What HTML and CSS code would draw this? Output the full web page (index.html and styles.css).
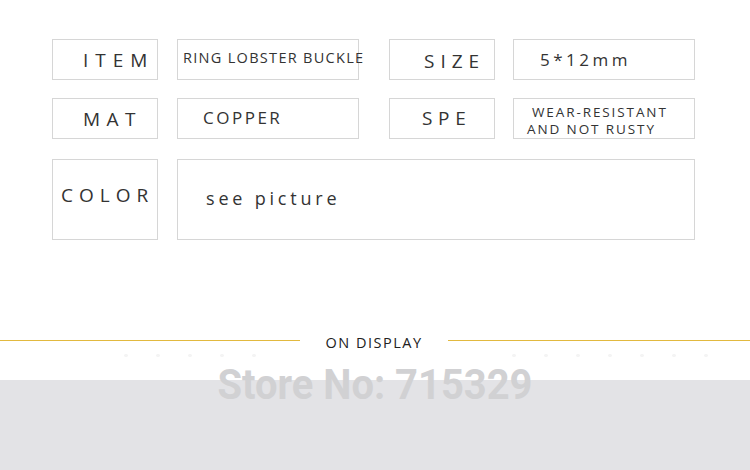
FILE: index.html
```html
<!DOCTYPE html>
<html lang="en">
<head>
  <meta charset="UTF-8" />
  <title>Product Specs</title>
  <link rel="stylesheet" href="styles.css">
</head>
<body>
  <div class="specs">
    <div class="spec-row">
      <div class="spec-label label-item">ITEM</div>
      <div class="spec-value value-item">RING LOBSTER BUCKLE</div>
      <div class="spec-label second label-size">SIZE</div>
      <div class="spec-value second value-size">5*12mm</div>
    </div>
    <div class="spec-row">
      <div class="spec-label label-mat">MAT</div>
      <div class="spec-value value-mat">COPPER</div>
      <div class="spec-label second label-spe">SPE</div>
      <div class="spec-value second value-spe">WEAR-RESISTANT<br>AND NOT RUSTY</div>
    </div>
    <div class="spec-row tall">
      <div class="spec-label label-color">COLOR</div>
      <div class="spec-value wide value-color">see picture</div>
    </div>
  </div>

  <div class="display-head">
    <span class="gold-line"></span>
    <h4>ON DISPLAY</h4>
    <span class="gold-line"></span>
  </div>

  <div class="dots">
    <span class="dot-group left"></span>
    <span class="dot-group right"></span>
  </div>

  <div class="store-banner">
    <div class="store-no">Store No: 715329</div>
  </div>
</body>
</html>
```

FILE: styles.css
```css
* {
  box-sizing: border-box;
}
body {
  margin: 0;
  width: 750px;
  height: 470px;
  overflow: hidden;
  background: #fff;
  font-family: 'Open Sans', 'Liberation Sans', sans-serif;
  color: #333;
}

.specs {
  padding: 39px 0 0 52px;
}

.spec-row {
  display: flex;
  height: 41px;
  margin-bottom: 18px;
}

.spec-row:nth-child(2) {
  margin-bottom: 20px;
}

.spec-row.tall {
  height: 81px;
  margin-bottom: 0;
}

.spec-label,
.spec-value {
  border: 1px solid #d6d6d6;
  display: flex;
  align-items: center;
  white-space: nowrap;
}

.spec-label {
  width: 106px;
  font-size: 19px;
  letter-spacing: 6.5px;
}

.spec-value {
  width: 182px;
  margin-left: 19px;
}

.spec-label.second {
  margin-left: 30px;
}

.spec-value.second {
  margin-left: 18px;
}

.spec-value.wide {
  width: 518px;
}

.label-item { padding-left: 30px; letter-spacing: 7px; }
.label-mat { padding-left: 30px; }
.label-size { padding: 3px 0 0 34px; letter-spacing: 6px; }
.label-spe { padding-left: 32px; letter-spacing: 5.7px; padding-bottom: 2px; }
.label-color { padding: 0 0 10px 8px; letter-spacing: 6px; }

.value-item {
  padding: 0 0 4px 5px;
  font-size: 14.5px;
  letter-spacing: 1.3px;
  overflow: visible;
}

.value-mat {
  padding: 0 0 2px 25px;
  font-size: 17px;
  letter-spacing: 2.5px;
}

.value-size {
  padding: 0 0 0 26px;
  font-size: 17px;
  letter-spacing: 3.5px;
}

.value-spe {
  padding: 0 0 0 13px;
  font-size: 13.5px;
  line-height: 17px;
  letter-spacing: 1.9px;
  text-indent: 5px;
  align-items: flex-end;
}

.value-color {
  padding: 0 0 3px 28px;
  font-size: 18px;
  letter-spacing: 3.8px;
}

.display-head {
  display: flex;
  align-items: flex-start;
  height: 20px;
  margin-top: 93px;
}

.gold-line {
  height: 1px;
  margin-top: 7px;
  background: #e2b93f;
  flex: 1;
}

.gold-line:first-child {
  flex: 0 0 300px;
}

.display-head h4 {
  margin: 0;
  width: 148px;
  line-height: 20px;
  text-align: center;
  font-weight: normal;
  font-size: 14.5px;
  letter-spacing: 1.5px;
  color: #222;
}

.dots {
  display: flex;
  height: 5px;
  padding-left: 110px;
}

.dot-group {
  height: 5px;
  background: radial-gradient(circle, #f4f4f4 1.5px, transparent 2px) 0 0 / 32px 5px repeat-x;
}

.dot-group.left {
  width: 170px;
}

.dot-group.right {
  width: 230px;
  margin-left: 218px;
}

.store-banner {
  height: 110px;
  margin-top: 2px;
  background: linear-gradient(#fff 0, #fff 20px, #e3e3e6 20px);
}

.store-no {
  font-family: Roboto, 'Liberation Sans', sans-serif;
  font-weight: bold;
  font-size: 42px;
  line-height: 50px;
  color: #d1d1d3;
  text-align: center;
  transform: scaleX(0.95);
}
```
